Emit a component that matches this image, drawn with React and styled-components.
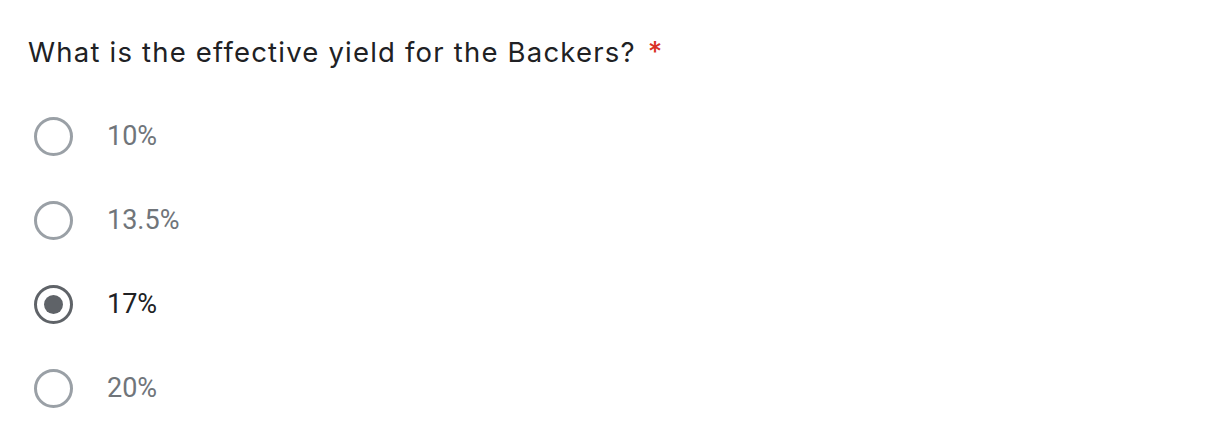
import React from "react";
import styled, { createGlobalStyle } from "styled-components";

const GlobalStyle = createGlobalStyle`
  body {
    margin: 0;
    background: #ffffff;
    font-family: Roboto, "Liberation Sans", sans-serif;
  }
`;

const options = ["10%", "13.5%", "17%", "20%"];

const App = () => {
  const selected = "17%";
  return (
    <>
      <GlobalStyle />
      <Card>
        <Question>
          What is the effective yield for the Backers?
          <Required>*</Required>
        </Question>
        <List>
          {options.map((o) => (
            <Option key={o}>
              <Radio $checked={o === selected} />
              <Label $checked={o === selected}>{o}</Label>
            </Option>
          ))}
        </List>
      </Card>
    </>
  );
};

export default App;

const Card = styled.div`
  padding: 32px 28px 0 34px;
`;

const Question = styled.div`
  font-family: Inter, "Open Sans", sans-serif;
  font-size: 27.5px;
  line-height: 40px;
  color: #202124;
  letter-spacing: 1.2px;
  margin-left: -6px;
`;

const Required = styled.span`
  color: #d93025;
  padding-left: 12px;
  font-size: 28px;
  font-weight: 500;
`;

const List = styled.div`
  display: flex;
  flex-direction: column;
  gap: 44px;
  margin-top: 44px;
`;

const Option = styled.div`
  display: flex;
  align-items: center;
  height: 40px;
`;

const Radio = styled.div`
  box-sizing: border-box;
  width: 39px;
  height: 39px;
  border-radius: 50%;
  border: 3.5px solid ${(p) => (p.$checked ? "#5f6368" : "#9aa0a6")};
  display: flex;
  align-items: center;
  justify-content: center;
  &::after {
    content: "";
    width: 19px;
    height: 19px;
    border-radius: 50%;
    background: #5f6368;
    display: ${(p) => (p.$checked ? "block" : "none")};
  }
`;

const Label = styled.span`
  margin-left: 34px;
  font-size: 27px;
  color: ${(p) => (p.$checked ? "#202124" : "#70757a")};
`;
